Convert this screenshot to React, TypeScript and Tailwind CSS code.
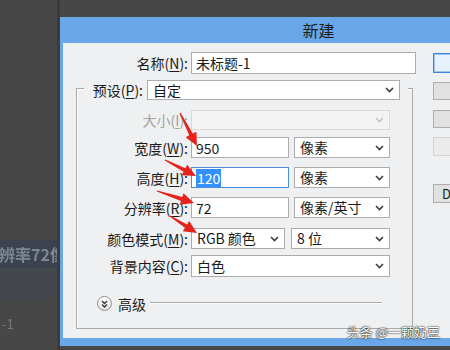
import { ReactNode } from "react";

type Pt = [number, number];

const ARROWS: [Pt, Pt][] = [
  [[180, 113], [197, 146]],
  [[165, 160], [196, 176]],
  [[157, 191], [194, 203]],
  [[170, 216], [197, 233]]
];

function arrowPoints([x1, y1]: Pt, [x2, y2]: Pt) {
  const dx = x2 - x1;
  const dy = y2 - y1;
  const len = Math.hypot(dx, dy);
  const ux = dx / len;
  const uy = dy / len;
  const nx = -uy;
  const ny = ux;
  const bx = x2 - ux * 13;
  const by = y2 - uy * 13;
  const p = (x: number, y: number, k: number) => `${x + nx * k},${y + ny * k}`;
  return [p(x1, y1, 0.6), p(bx, by, 2), p(bx, by, 6), `${x2},${y2}`, p(bx, by, -6), p(bx, by, -2), p(x1, y1, -0.6)].join(" ");
}

function Chevron({ light }: { light?: boolean }) {
  return (
    <svg width="9" height="6" viewBox="0 0 9 6" className="shrink-0">
      <path d="M1 1l3.5 3.5L8 1" fill="none" stroke={light ? "#c6c6c6" : "#3c3c3c"} strokeWidth="1.6" />
    </svg>
  );
}

function Key({ label, k }: { label: string; k: string }) {
  return (
    <>
      {label}(<span className="underline underline-offset-2">{k}</span>):
    </>
  );
}

function Select({ className, children, disabled }: { className: string; children?: ReactNode; disabled?: boolean }) {
  return (
    <div
      className={`flex items-center justify-between border pl-[5px] pr-[5px] text-[14px] leading-none ${
        disabled ? "border-[#d9d9d9] bg-[#f3f3f3]" : "border-[#acacac] bg-white text-[#1a1a1a]"
      } ${className}`}
    >
      <span className="-mt-px">{children}</span>
      <Chevron light={disabled} />
    </div>
  );
}

function Field({ className, children }: { className: string; children: ReactNode }) {
  return (
    <div className={`flex items-center border border-[#acacac] bg-white pl-[4px] text-[14px] leading-none text-[#1a1a1a] ${className}`}>
      {children}
    </div>
  );
}

function Row({ className, label, children, muted }: { className: string; label: ReactNode; children: ReactNode; muted?: boolean }) {
  return (
    <div className={`flex items-center ${className}`}>
      <div className={`w-[111px] text-right text-[14px] leading-none ${muted ? "text-[#a3a3a3]" : "text-[#1a1a1a]"}`}>{label}</div>
      <div className="ml-[3px] flex items-center">{children}</div>
    </div>
  );
}

function SideButton({ className, children }: { className: string; children?: ReactNode }) {
  return (
    <div className={`flex items-center whitespace-nowrap border pl-[8px] text-[13px] leading-none text-[#1a1a1a] ${className}`}>
      {children}
    </div>
  );
}

export default function App() {
  return (
    <div className="relative flex h-[350px] w-[450px] overflow-hidden bg-[#474747] font-['Noto_Sans_CJK_SC',sans-serif]">
      {/* desktop behind the dialog */}
      <div className="flex w-[60px] shrink-0 flex-col border-r-[3px] border-[#3b3b3b]">
        <div className="h-[240px] bg-[#474747]" />
        <div className="flex h-[28px] items-center overflow-hidden bg-[#3d434e]">
          <span className="-ml-[17px] whitespace-nowrap text-[16px] font-bold text-[#7d8796] blur-[0.4px]">分辨率72像素</span>
        </div>
        <div className="h-[32px] bg-[#44474c]" />
        <div className="flex-1 pl-[2px] pt-[17px] text-[13px] leading-none text-[#7a7a7a]">-1</div>
      </div>

      {/* dialog */}
      <div className="shrink-0 pt-[17px]">
        <div className="flex h-[329px] w-[514px] flex-col border-l-[3px] border-[#6aa7e8]">
          <div className="flex h-[26px] items-center justify-center bg-[#6aa7e8] text-[16px] leading-none text-[#1e1e1e]">新建</div>

          <div className="flex h-[295px] bg-[#eff0f1]">
            <div className="w-[357px] shrink-0 pt-[9px]">
              <div className="flex h-[22px] items-center">
                <div className="w-[125px] text-right text-[14px] leading-none text-[#1a1a1a]">
                  <Key label="名称" k="N" />
                </div>
                <Field className="ml-[3px] h-[22px] w-[225px]">未标题-1</Field>
              </div>

              <div className="ml-[13px] mt-[14px] h-[241px] w-[337px] border border-[#a9a9a9] shadow-[inset_1px_1px_0_#fff]">
                <div className="-mt-[9px] ml-[7px] flex w-[324px] items-center bg-[#eff0f1]">
                  <div className="w-[59px] text-right text-[14px] leading-none text-[#1a1a1a]">
                    <Key label="预设" k="P" />
                  </div>
                  <Select className="ml-[4px] h-[20px] w-[253px]">自定</Select>
                </div>

                <Row className="mt-[10px]" label={<Key label="大小" k="I" />} muted>
                  <Select className="h-[20px] w-[199px]" disabled />
                </Row>

                <Row className="mt-[7px]" label={<Key label="宽度" k="W" />}>
                  <Field className="h-[21px] w-[98px]">950</Field>
                  <Select className="ml-[5px] h-[21px] w-[96px]">像素</Select>
                </Row>

                <Row className="mt-[9px]" label={<Key label="高度" k="H" />}>
                  <div className="flex h-[21px] w-[98px] items-center border border-[#4a90dd] bg-white pl-[4px] text-[14px] leading-none">
                    <span className="bg-[#3390ff] px-px py-[2px] text-white">120</span>
                  </div>
                  <Select className="ml-[5px] h-[21px] w-[96px]">像素</Select>
                </Row>

                <Row className="mt-[9px]" label={<Key label="分辨率" k="R" />}>
                  <Field className="h-[21px] w-[98px]">72</Field>
                  <Select className="ml-[5px] h-[21px] w-[96px]">像素/英寸</Select>
                </Row>

                <Row className="mt-[10px]" label={<Key label="颜色模式" k="M" />}>
                  <Select className="h-[21px] w-[94px]">RGB 颜色</Select>
                  <Select className="ml-[6px] h-[21px] w-[99px]">8 位</Select>
                </Row>

                <Row className="mt-[6px]" label={<Key label="背景内容" k="C" />}>
                  <Select className="h-[22px] w-[199px]">白色</Select>
                </Row>

                <div className="mt-[19px] flex items-center pl-[20px]">
                  <div className="flex h-[15px] w-[15px] items-center justify-center rounded-full border border-[#8f8f8f] bg-[linear-gradient(180deg,#ffffff,#e2e2e2)]">
                    <svg width="7" height="8" viewBox="0 0 7 8">
                      <path d="M1 1l2.5 2.5L6 1M1 4.5L3.5 7 6 4.5" fill="none" stroke="#333" strokeWidth="1.3" />
                    </svg>
                  </div>
                  <span className="ml-[6px] text-[14px] leading-none text-[#1a1a1a]">高级</span>
                  <div className="ml-[4px] mt-[-2px] h-[2px] w-[232px] border-t border-b border-t-[#a9a9a9] border-b-white" />
                </div>
              </div>
            </div>

            <div className="ml-[13px] flex w-[90px] shrink-0 flex-col">
              <SideButton className="mt-[10px] h-[20px] border-[#3b86d8] bg-[#e5f1fb] shadow-[inset_0_0_0_1px_#9cc6ef]" />
              <SideButton className="mt-[9px] h-[18px] border-[#adadad] bg-[#e1e1e1]" />
              <SideButton className="mt-[10px] h-[18px] border-[#adadad] bg-[#e1e1e1]" />
              <SideButton className="mt-[9px] h-[19px] border-[#d4d4d4] bg-[#ebebeb]" />
              <SideButton className="mt-[28px] h-[19px] border-[#adadad] bg-[#e1e1e1]">Device Central...</SideButton>
            </div>
          </div>

          <div className="h-[8px] bg-[#6aa7e8]" />
        </div>
      </div>

      {/* annotations drawn over the screenshot */}
      <svg className="pointer-events-none absolute left-0 top-0" width="450" height="350">
        {ARROWS.map(([a, b], i) => (
          <polygon key={i} points={arrowPoints(a, b)} fill="#e5231c" />
        ))}
      </svg>
      <div className="absolute right-[10px] top-[325px] text-[13px] leading-none text-white [text-shadow:0_0_2px_#000,0_0_1px_#000]">
        头条 @一颗奶豆
      </div>
    </div>
  );
}
